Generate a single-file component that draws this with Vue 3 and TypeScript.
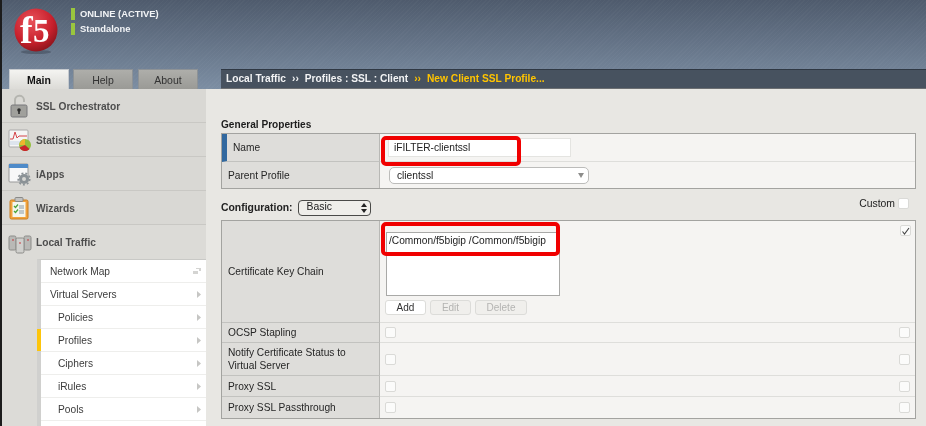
<script setup lang="ts">
interface NavItem {
  label: string;
  icon: string;
}

interface SubItem {
  label: string;
  nested?: boolean;
  active?: boolean;
  mapIcon?: boolean;
}

const tabs = ['Main', 'Help', 'About'];

const navItems: NavItem[] = [
  { label: 'SSL Orchestrator', icon: 'lock' },
  { label: 'Statistics', icon: 'stats' },
  { label: 'iApps', icon: 'apps' },
  { label: 'Wizards', icon: 'wizard' },
];

const subItems: SubItem[] = [
  { label: 'Network Map', mapIcon: true },
  { label: 'Virtual Servers' },
  { label: 'Policies', nested: true },
  { label: 'Profiles', nested: true, active: true },
  { label: 'Ciphers', nested: true },
  { label: 'iRules', nested: true },
  { label: 'Pools', nested: true },
];

const optionRows = [
  { label: 'OCSP Stapling', cls: 'row-ocsp' },
  { label: 'Notify Certificate Status to Virtual Server', cls: 'row-notify' },
  { label: 'Proxy SSL', cls: 'row-proxy' },
  { label: 'Proxy SSL Passthrough', cls: 'row-pass' },
];
</script>

<template>
  <div class="page">
    <header class="top">
      <div class="brand">
        <svg class="logo" width="46" height="46" viewBox="0 0 46 46">
          <defs>
            <radialGradient id="ball" cx="0.4" cy="0.3" r="0.8">
              <stop offset="0" stop-color="#e8525a" />
              <stop offset="0.6" stop-color="#c8202c" />
              <stop offset="1" stop-color="#7c1118" />
            </radialGradient>
          </defs>
          <ellipse cx="22" cy="44" rx="15" ry="2" fill="#3c4654" opacity="0.5" />
          <circle cx="22" cy="22" r="21.5" fill="url(#ball)" />
          <text x="6" y="35" class="logo-f">f</text>
          <text x="19" y="34" class="logo-5">5</text>
        </svg>
        <div class="status">
          <div class="status-line">ONLINE (ACTIVE)</div>
          <div class="status-line">Standalone</div>
        </div>
      </div>
      <div class="tabbar">
        <div class="tabs">
          <div v-for="(t, i) in tabs" :key="t" class="tab" :class="{ on: i === 0 }">{{ t }}</div>
        </div>
        <div class="crumbs">
          <span>Local Traffic</span><span class="sep">››</span><span>Profiles : SSL : Client</span><span class="sep new">››</span><span class="new">New Client SSL Profile...</span>
        </div>
      </div>
    </header>

    <div class="main">
      <aside class="side">
        <div v-for="n in navItems" :key="n.label" class="nav">
          <svg class="nav-icon" width="24" height="24" viewBox="0 0 24 24">
            <template v-if="n.icon === 'lock'">
              <path d="M7 11V6.500a4.500 4.500 0 0 1 9-.5V8" fill="none" stroke="#b5b5b0" stroke-width="2" />
              <rect x="3" y="11" width="16" height="12" rx="1.500" fill="#a0a09c" stroke="#77777a" />
              <circle cx="11" cy="16" r="1.800" fill="#2f2f2f" />
              <rect x="10.200" y="16" width="1.600" height="4" fill="#2f2f2f" />
            </template>
            <template v-else-if="n.icon === 'stats'">
              <rect x="1" y="2" width="19" height="17" rx="1" fill="#f5f5f5" stroke="#aaa" />
              <path d="M2 11h3l2-7 2 6 2-2h8" fill="none" stroke="#d4454a" stroke-width="1" />
              <path d="M2 14h17M2 16h17" stroke="#c5d4e6" stroke-width="1" />
              <circle cx="17" cy="17" r="6" fill="#93bf3c" />
              <path d="M17 17L11.500 19.500A6 6 0 0 0 21.500 21Z" fill="#c9252c" />
              <path d="M17 17L11.500 17A6 6 0 0 1 17 11Z" fill="#efb62d" />
            </template>
            <template v-else-if="n.icon === 'apps'">
              <rect x="1" y="2" width="19" height="18" rx="1" fill="#f8f8f8" stroke="#999" />
              <rect x="1" y="2" width="19" height="4" fill="#4f8bc9" />
              <circle cx="16" cy="17" r="5" fill="#8b9296" />
              <circle cx="16" cy="17" r="5.800" fill="none" stroke="#8b9296" stroke-width="1.600" stroke-dasharray="2 2" />
              <circle cx="16" cy="17" r="2" fill="#d6d6d2" />
            </template>
            <template v-else-if="n.icon === 'wizard'">
              <rect x="2" y="4" width="18" height="19" rx="1.500" fill="#f2a33c" stroke="#c97f22" />
              <rect x="4.500" y="6" width="13" height="15" fill="#f4f6ee" />
              <rect x="7" y="1.500" width="8" height="4" rx="1" fill="#c2c2c0" stroke="#8a8a88" />
              <path d="M6 10l1.500 1.500L10 8.500M6 15l1.500 1.500L10 13.500" fill="none" stroke="#4aa33a" stroke-width="1.300" />
              <path d="M11 10h5M11 12h5M11 15h5M11 17h5" stroke="#8a9aa8" stroke-width="1" />
            </template>
          </svg>
          <span>{{ n.label }}</span>
        </div>

        <div class="nav open">
          <svg class="nav-icon" width="24" height="24" viewBox="0 0 24 24">
            <rect x="1" y="5" width="7" height="14" rx="1.500" fill="#b9b9b6" stroke="#8c8c89" />
            <rect x="16" y="5" width="7" height="14" rx="1.500" fill="#b9b9b6" stroke="#8c8c89" />
            <rect x="8" y="7" width="8" height="15" rx="1.500" fill="#d0d0cd" stroke="#8c8c89" />
            <circle cx="5" cy="9" r="0.800" fill="#c9252c" />
            <circle cx="12" cy="12" r="0.800" fill="#c9252c" />
            <circle cx="20" cy="9" r="0.800" fill="#c9252c" />
          </svg>
          <span>Local Traffic</span>
        </div>

        <ul class="sub">
          <li v-for="s in subItems" :key="s.label" :class="{ nested: s.nested, active: s.active }">
            <span>{{ s.label }}</span>
            <svg v-if="s.mapIcon" width="8" height="6" viewBox="0 0 8 6"><path d="M0 3h5v3H0zM3 0h5v3H6V1H3z" fill="#d4d4d2" /></svg>
            <svg v-else width="4" height="7" viewBox="0 0 4 7"><path d="M0 0l4 3.500L0 7z" fill="#c6c6c4" /></svg>
          </li>
          <li class="stub"></li>
        </ul>
      </aside>

      <main class="content">
        <h2 class="section">General Properties</h2>
        <div class="table">
          <div class="row row-name">
            <div class="label label-req">Name</div>
            <div class="field">
              <div class="input">iFILTER-clientssl</div>
              <div class="mark mark-name"></div>
            </div>
          </div>
          <div class="row row-parent">
            <div class="label">Parent Profile</div>
            <div class="field">
              <div class="select">clientssl<i class="caret"></i></div>
            </div>
          </div>
        </div>

        <div class="config">
          <strong>Configuration:</strong>
          <div class="mini-select">
            Basic
            <svg width="6" height="10" viewBox="0 0 6 10"><path d="M3 0l3 4H0zM3 10L0 6h6z" fill="#222" /></svg>
          </div>
          <div class="custom">Custom <span class="box"></span></div>
        </div>

        <div class="table">
          <div class="row row-cert">
            <div class="label">Certificate Key Chain</div>
            <div class="field cert">
              <div class="chain">/Common/f5bigip /Common/f5bigip</div>
              <div class="btns">
                <button class="btn">Add</button>
                <button class="btn off">Edit</button>
                <button class="btn off">Delete</button>
              </div>
              <div class="mark mark-cert"></div>
              <span class="box tick">
                <svg width="9" height="8" viewBox="0 0 9 8"><path d="M1.500 4.500L3.500 7L8 1" fill="none" stroke="#444" stroke-width="1.100" /></svg>
              </span>
            </div>
          </div>
          <div v-for="r in optionRows" :key="r.label" class="row" :class="r.cls">
            <div class="label">{{ r.label }}</div>
            <div class="field opt">
              <span class="box"></span>
              <span class="box"></span>
            </div>
          </div>
        </div>
      </main>
    </div>
  </div>
</template>

<style>
html, body {
  margin: 0;
  background: #000;
  overflow: hidden;
}
</style>

<style scoped>
.page {
  width: 926px;
  height: 426px;
  overflow: hidden;
  box-sizing: border-box;
  border-left: 2px solid #1c1c1c;
  font-family: "Liberation Sans", Arial, sans-serif;
  font-size: 10.200px;
  color: #222;
  background: #e8e7e3;
  filter: blur(0.3px);
}

.top {
  height: 89px;
  display: flex;
  flex-direction: column;
  background:
    repeating-linear-gradient(135deg, rgba(255, 255, 255, 0.025) 0 1px, transparent 1px 3px),
    linear-gradient(#4f5b6d, #7c8ea3);
}

.brand {
  height: 69px;
  display: flex;
  align-items: flex-start;
}

.logo {
  margin: 8px 0 0 12px;
}

.logo-f {
  font-family: "Liberation Serif", serif;
  font-weight: 700;
  font-size: 38px;
  fill: #fff;
}

.logo-5 {
  font-family: "Liberation Serif", serif;
  font-weight: 700;
  font-size: 33px;
  fill: #fff;
}

.status {
  margin: 8px 0 0 11px;
  display: flex;
  flex-direction: column;
  gap: 3px;
}

.status-line {
  height: 12px;
  line-height: 12px;
  border-left: 4px solid #9ac63e;
  padding-left: 5px;
  color: #f2f4f6;
  font-size: 9.400px;
  font-weight: 700;
}

.tabbar {
  height: 20px;
  display: flex;
}

.tabs {
  width: 219px;
  display: flex;
  gap: 4px;
  padding-left: 7px;
  box-sizing: border-box;
}

.tab {
  width: 60px;
  height: 20px;
  box-sizing: border-box;
  border: 1px solid #8d9296;
  border-bottom: 0;
  background: linear-gradient(#aeaeaa, #9a9a96);
  color: #333;
  text-align: center;
  line-height: 20px;
  font-size: 10.500px;
}

.tab:nth-child(3) {
  margin-left: 1px;
}

.tab.on {
  background: linear-gradient(#f4f4f1, #dcdbd7);
  border-color: #c6cace;
  color: #111;
  font-weight: 700;
}

.crumbs {
  flex: 1;
  height: 20px;
  box-sizing: border-box;
  border-top: 1px solid #2f3843;
  border-bottom: 1px solid #6c6f72;
  background: #47525f;
  color: #f2f3f4;
  font-size: 10.200px;
  font-weight: 700;
  line-height: 18px;
  padding-left: 5px;
}

.sep {
  margin: 0 6px;
}

.new {
  color: #ffc400;
}

.main {
  height: 337px;
  display: flex;
}

.side {
  width: 204px;
  flex: none;
  background: #dcdbd7;
}

.nav {
  height: 34px;
  box-sizing: border-box;
  padding-top: 1px;
  display: flex;
  align-items: center;
  border-bottom: 1px solid #c9c8c4;
  background: #d9d8d4;
  color: #4d4d4d;
  font-weight: 700;
  font-size: 10.200px;
}

.nav.open {
  border-bottom: 0;
  background: #dcdbd7;
}

.nav-icon {
  margin: 0 4px 0 6px;
  flex: none;
}

.sub {
  list-style: none;
  margin: 0 0 0 35px;
  padding: 0;
  border-left: 4px solid #d0d0ce;
  background: #fff;
  border-top: 1px solid #c9c9c6;
}

.sub li {
  height: 22px;
  margin-bottom: 1px;
  display: flex;
  align-items: center;
  justify-content: space-between;
  padding: 0 5px 0 9px;
  background: #fff;
  box-shadow: 0 1px 0 #eeeeec;
  color: #3c3c3c;
  font-size: 10.200px;
  position: relative;
}

.sub li.nested {
  padding-left: 17px;
}

.sub li.active::before {
  content: "";
  position: absolute;
  left: -4px;
  top: 0;
  width: 4px;
  height: 22px;
  background: #fdc50c;
}

.content {
  flex: 1;
  padding: 30px 10px 0 15px;
  background: #e8e7e3;
}

.section {
  margin: 0 0 2px;
  height: 12px;
  line-height: 12px;
  font-size: 10.100px;
  font-weight: 700;
  color: #1d1d1d;
}

.table {
  border: 1px solid #a3a3a0;
  background: #f5f4f2;
}

.row {
  display: flex;
  border-bottom: 1px solid #dededb;
}

.row:last-child {
  border-bottom: 0;
}

.label {
  width: 158px;
  flex: none;
  box-sizing: border-box;
  padding: 0 6px;
  display: flex;
  align-items: center;
  background: #dedddA;
  border-right: 1px solid #b8b8b5;
  border-bottom: 1px solid #c2c2bf;
  margin-bottom: -1px;
  color: #262626;
  font-size: 10.200px;
  line-height: 13px;
}

.row:last-child .label {
  border-bottom: 0;
  margin-bottom: 0;
}

.label-req {
  border-left: 5px solid #31689f;
  padding-left: 6px;
}

.field {
  flex: 1;
  position: relative;
  display: flex;
  align-items: center;
  padding-left: 8px;
}

.row-name { height: 27px; }
.row-parent { height: 26px; }
.row-cert { height: 101px; }
.row-ocsp { height: 19px; }
.row-notify { height: 32px; }
.row-proxy { height: 20px; }
.row-pass { height: 21px; }

.input {
  width: 183px;
  height: 19px;
  box-sizing: border-box;
  border: 1px solid #e4e4e1;
  background: #fff;
  line-height: 17px;
  padding-left: 5px;
  color: #222;
  font-size: 10.200px;
}

.select {
  width: 200px;
  height: 17px;
  box-sizing: border-box;
  border: 1px solid #bcbcba;
  border-radius: 5px;
  background: #fff;
  padding-left: 7px;
  line-height: 15px;
  font-size: 10.200px;
  position: relative;
  margin-left: 1px;
}

.caret {
  position: absolute;
  right: 4px;
  top: 5px;
  border-left: 3px solid transparent;
  border-right: 3px solid transparent;
  border-top: 5px solid #8d8d8b;
}

.mark {
  position: absolute;
  box-sizing: border-box;
  border: 4px solid #f00000;
  border-radius: 5px;
  pointer-events: none;
}

.mark-name {
  left: 1px;
  top: 2px;
  width: 140px;
  height: 30px;
}

.mark-cert {
  left: 1px;
  top: 1px;
  width: 179px;
  height: 34px;
}

.config {
  height: 17px;
  margin: 10px 0 4px;
  display: flex;
  align-items: center;
  font-size: 10.400px;
}

.config strong {
  margin-right: 5px;
  color: #222;
}

.mini-select {
  width: 73px;
  height: 16px;
  box-sizing: border-box;
  border: 1px solid #4a4a48;
  border-radius: 4px;
  background: #efeeea;
  display: flex;
  align-items: center;
  justify-content: space-between;
  padding: 0 3px 2px 8px;
  color: #222;
}

.mini-select svg {
  margin-top: 2px;
}

.custom {
  margin-left: auto;
  margin-right: 7px;
  margin-bottom: 9px;
  display: flex;
  align-items: center;
  gap: 3px;
  color: #222;
}

.box {
  width: 9px;
  height: 9px;
  flex: none;
  display: inline-block;
  border: 1px solid #dadad7;
  border-radius: 2px;
  background: #fbfbfa;
}

.custom .box {
  background: #fff;
}

.cert {
  flex-direction: column;
  align-items: flex-start;
  padding-left: 6px;
}

.chain {
  width: 174px;
  height: 64px;
  margin-top: 11px;
  box-sizing: border-box;
  border: 1px solid #a9a9a7;
  background: #fff;
  padding-left: 2px;
  line-height: 15px;
  font-size: 10.200px;
  color: #222;
}

.btns {
  display: flex;
  gap: 4px;
  margin-top: 4px;
  margin-left: -1px;
}

.btn {
  height: 15px;
  padding: 0;
  box-sizing: border-box;
  border: 1px solid #dcdcd9;
  border-radius: 3px;
  background: #fff;
  font-family: inherit;
  font-size: 10px;
  color: #333;
  width: 41px;
}

.btn.off {
  background: #f0efec;
  color: #b4b4b2;
}

.btn.off:last-child {
  width: 52px;
}

.tick {
  position: absolute;
  right: 4px;
  top: 4px;
  display: flex;
  align-items: center;
  justify-content: center;
}

.opt {
  justify-content: space-between;
  padding: 0 5px 0 5px;
}
</style>
